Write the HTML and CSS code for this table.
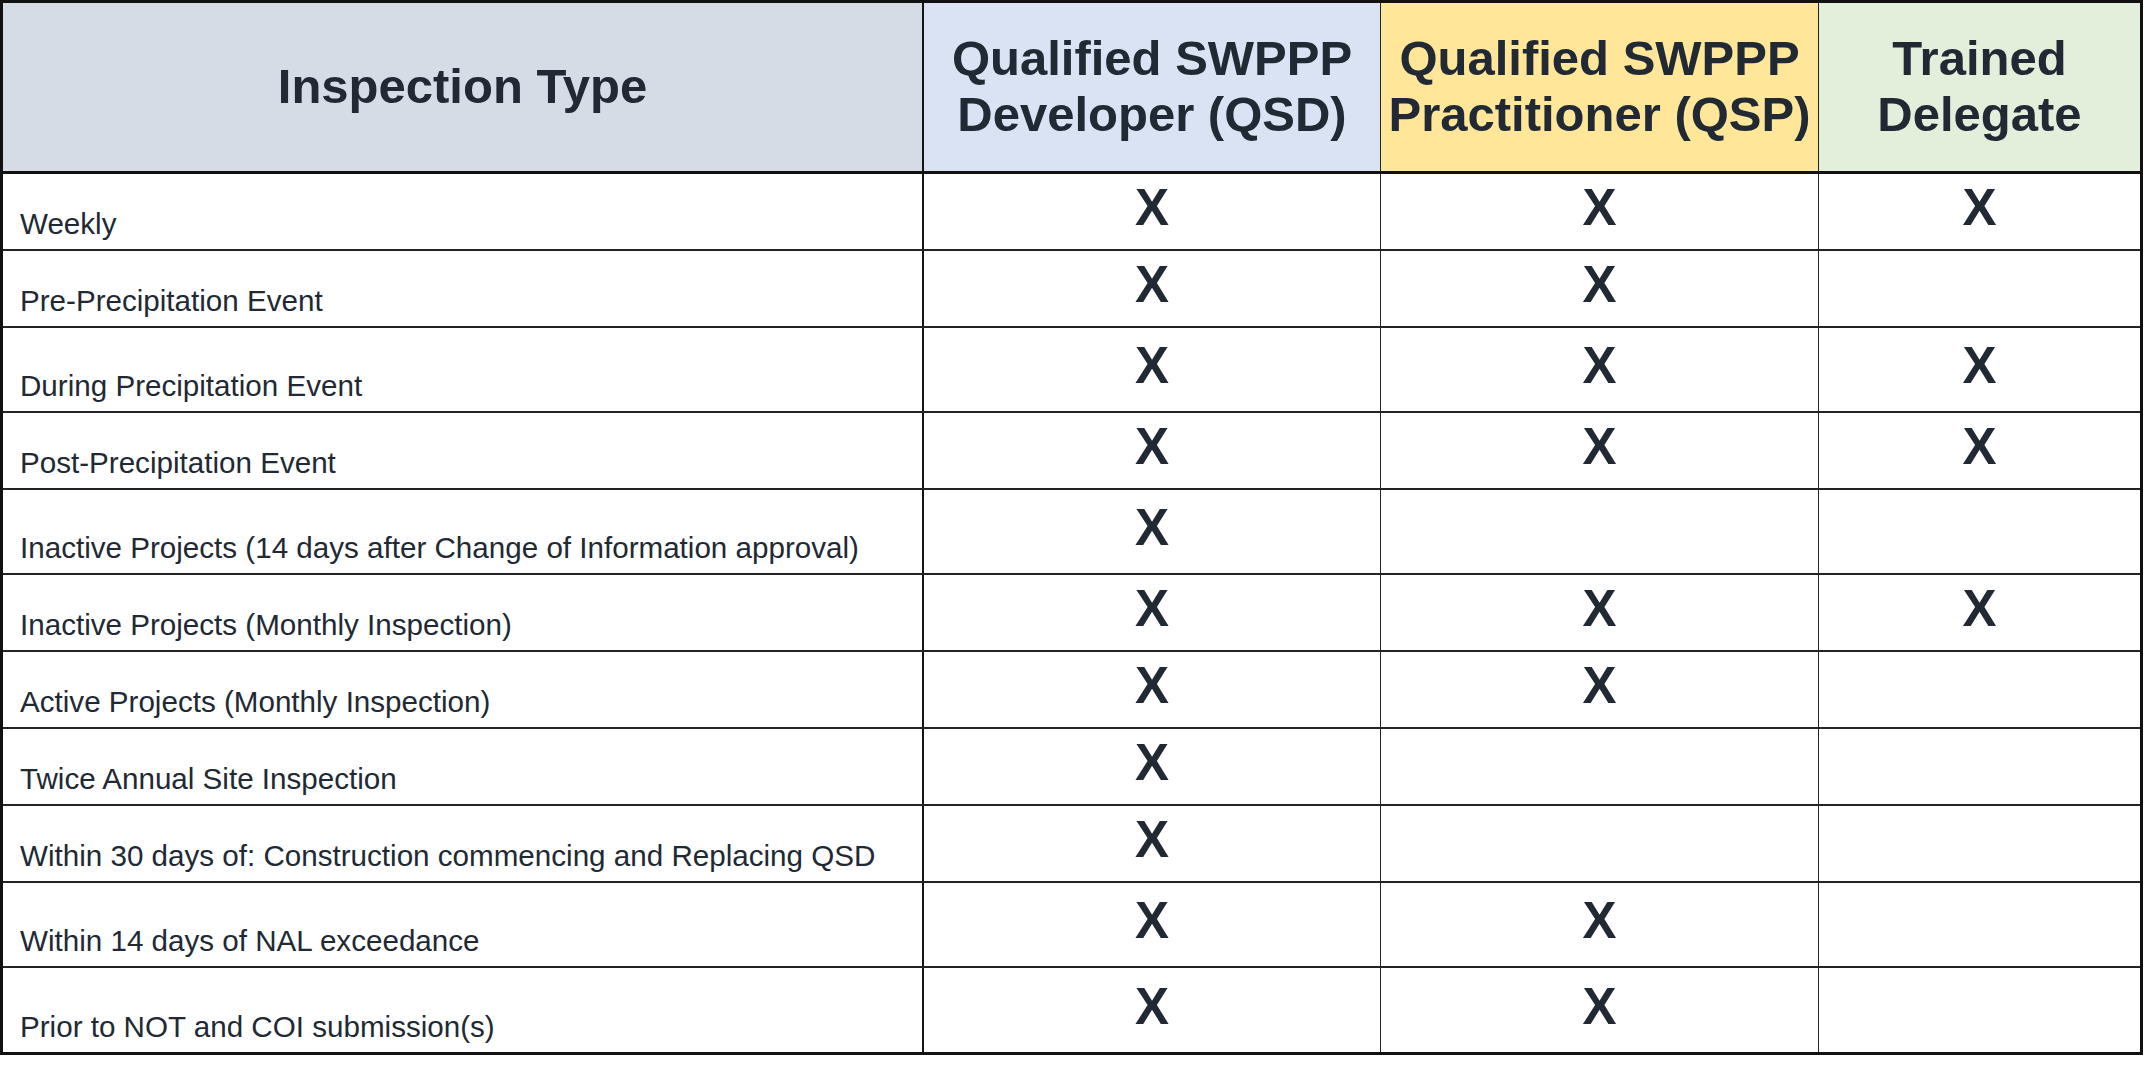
FILE: index.html
```html
<!DOCTYPE html>
<html lang="en">
<head>
<meta charset="utf-8">
<title>Inspection Types</title>
<link rel="stylesheet" href="styles.css">
</head>
<body>
<div class="matrix">
  <div class="row head">
    <div class="cell h-type">Inspection Type</div>
    <div class="cell h-qsd">Qualified SWPPP<br>Developer (QSD)</div>
    <div class="cell h-qsp">Qualified SWPPP<br>Practitioner (QSP)</div>
    <div class="cell h-td">Trained<br>Delegate</div>
  </div>
  <div class="row">
    <div class="cell label">Weekly</div>
    <div class="cell mark">X</div><div class="cell mark">X</div><div class="cell mark">X</div>
  </div>
  <div class="row">
    <div class="cell label">Pre-Precipitation Event</div>
    <div class="cell mark">X</div><div class="cell mark">X</div><div class="cell mark"></div>
  </div>
  <div class="row tall">
    <div class="cell label">During Precipitation Event</div>
    <div class="cell mark">X</div><div class="cell mark">X</div><div class="cell mark">X</div>
  </div>
  <div class="row">
    <div class="cell label">Post-Precipitation Event</div>
    <div class="cell mark">X</div><div class="cell mark">X</div><div class="cell mark">X</div>
  </div>
  <div class="row tall">
    <div class="cell label">Inactive Projects (14 days after Change of Information approval)</div>
    <div class="cell mark">X</div><div class="cell mark"></div><div class="cell mark"></div>
  </div>
  <div class="row">
    <div class="cell label">Inactive Projects (Monthly Inspection)</div>
    <div class="cell mark">X</div><div class="cell mark">X</div><div class="cell mark">X</div>
  </div>
  <div class="row">
    <div class="cell label">Active Projects (Monthly Inspection)</div>
    <div class="cell mark">X</div><div class="cell mark">X</div><div class="cell mark"></div>
  </div>
  <div class="row">
    <div class="cell label">Twice Annual Site Inspection</div>
    <div class="cell mark">X</div><div class="cell mark"></div><div class="cell mark"></div>
  </div>
  <div class="row">
    <div class="cell label">Within 30 days of: Construction commencing and Replacing QSD</div>
    <div class="cell mark">X</div><div class="cell mark"></div><div class="cell mark"></div>
  </div>
  <div class="row tall">
    <div class="cell label">Within 14 days of NAL exceedance</div>
    <div class="cell mark">X</div><div class="cell mark">X</div><div class="cell mark"></div>
  </div>
  <div class="row last">
    <div class="cell label">Prior to NOT and COI submission(s)</div>
    <div class="cell mark">X</div><div class="cell mark">X</div><div class="cell mark"></div>
  </div>
</div>
</body>
</html>
```
FILE: styles.css
```css
* { box-sizing: border-box; }

html, body {
  margin: 0;
  padding: 0;
  background: #ffffff;
}

body {
  font-family: "Liberation Sans", Arial, sans-serif;
  color: #212934;
}

.matrix {
  width: 2143px;
  border: 3px solid #111111;
  display: flex;
  flex-direction: column;
}

.row {
  display: grid;
  grid-template-columns: 921px 457px 438px 1fr;
  height: 77px;
  border-bottom: 2px solid #242424;
}

.row.tall { height: 85px; }

.row.last {
  height: 84px;
  border-bottom: none;
}

.row.head {
  height: 171px;
  border-bottom: 3px solid #111111;
}

.cell {
  border-right: 1px solid #242424;
}

.cell:first-child {
  border-right: 2px solid #151515;
}

.cell:last-child {
  border-right: none;
}

.head .cell {
  display: flex;
  align-items: center;
  justify-content: center;
  text-align: center;
  font-weight: bold;
  font-size: 49px;
  line-height: normal;
  padding: 0 2px 2px;
}

.h-type { background: #d6dce5; }
.h-qsd { background: #dae3f3; }
.h-qsp { background: #ffe699; }
.h-td { background: #e2efda; }

.label {
  display: flex;
  align-items: flex-end;
  font-size: 29.6px;
  line-height: normal;
  padding: 0 0 8px 17px;
  white-space: nowrap;
}

.mark {
  display: flex;
  align-items: center;
  justify-content: center;
  font-weight: bold;
  font-size: 51px;
  line-height: 1;
  padding-bottom: 8px;
}
```
